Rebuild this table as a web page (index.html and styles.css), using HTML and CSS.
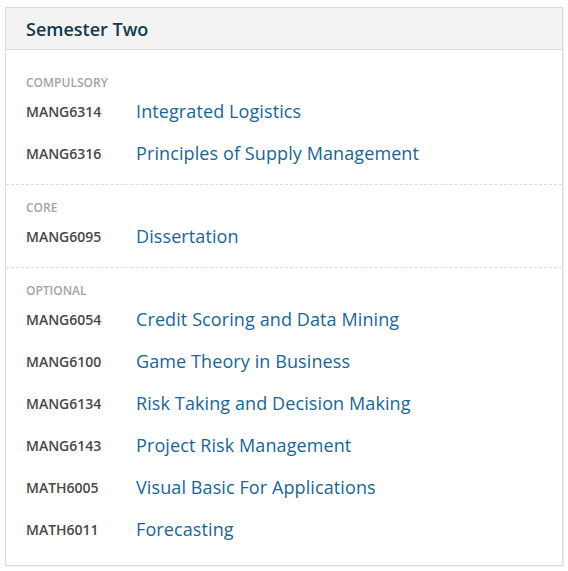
FILE: index.html
```html
<!DOCTYPE html>
<html>
<head>
<meta charset="utf-8">
<link rel="stylesheet" href="styles.css">
</head>
<body>
<div class="card">
  <div class="card-header">Semester Two</div>
  <div class="card-body">
    <div class="group">
      <div class="group-label">COMPULSORY</div>
      <div class="row"><span class="code">MANG6314</span><span class="title">Integrated Logistics</span></div>
      <div class="row"><span class="code">MANG6316</span><span class="title">Principles of Supply Management</span></div>
    </div>
    <div class="group">
      <div class="group-label">CORE</div>
      <div class="row"><span class="code">MANG6095</span><span class="title">Dissertation</span></div>
    </div>
    <div class="group">
      <div class="group-label">OPTIONAL</div>
      <div class="row"><span class="code">MANG6054</span><span class="title">Credit Scoring and Data Mining</span></div>
      <div class="row"><span class="code">MANG6100</span><span class="title">Game Theory in Business</span></div>
      <div class="row"><span class="code">MANG6134</span><span class="title">Risk Taking and Decision Making</span></div>
      <div class="row"><span class="code">MANG6143</span><span class="title">Project Risk Management</span></div>
      <div class="row"><span class="code">MATH6005</span><span class="title">Visual Basic For Applications</span></div>
      <div class="row"><span class="code">MATH6011</span><span class="title">Forecasting</span></div>
    </div>
  </div>
</div>
</body>
</html>
```
FILE: styles.css
```css
html, body {
  margin: 0;
  padding: 0;
  background: #ffffff;
}
body {
  padding: 7px 5px 5px 5px;
  font-family: "Open Sans", "Noto Sans", sans-serif;
}
.card {
  width: 556px;
  border: 1px solid #dcdcdc;
  box-shadow: 1px 1px 1px rgba(0,0,0,0.06);
  background: #fff;
}
.card-header {
  height: 42px;
  box-sizing: border-box;
  background: #f3f3f3;
  border-bottom: 1px solid #dcdcdc;
  padding: 0 20px;
  display: flex;
  align-items: center;
  font-size: 18px;
  font-weight: 600;
  color: #12394f;
}
.card-body {
  padding: 10px 0 5px 0;
}
.group {
  padding: 16px 20px 10px 20px;
  border-top: 1px dashed #dddddd;
}
.group:first-child {
  border-top: none;
}
.group-label {
  height: 14px;
  line-height: 14px;
  font-size: 12px;
  font-weight: 600;
  color: #a3a3a3;
}
.row {
  height: 42px;
  display: flex;
  align-items: center;
}
.code {
  width: 110px;
  flex: none;
  font-size: 14px;
  font-weight: 600;
  color: #484848;
}
.title {
  font-size: 18px;
  letter-spacing: 0.1px;
  color: #1b6593;
}
```
